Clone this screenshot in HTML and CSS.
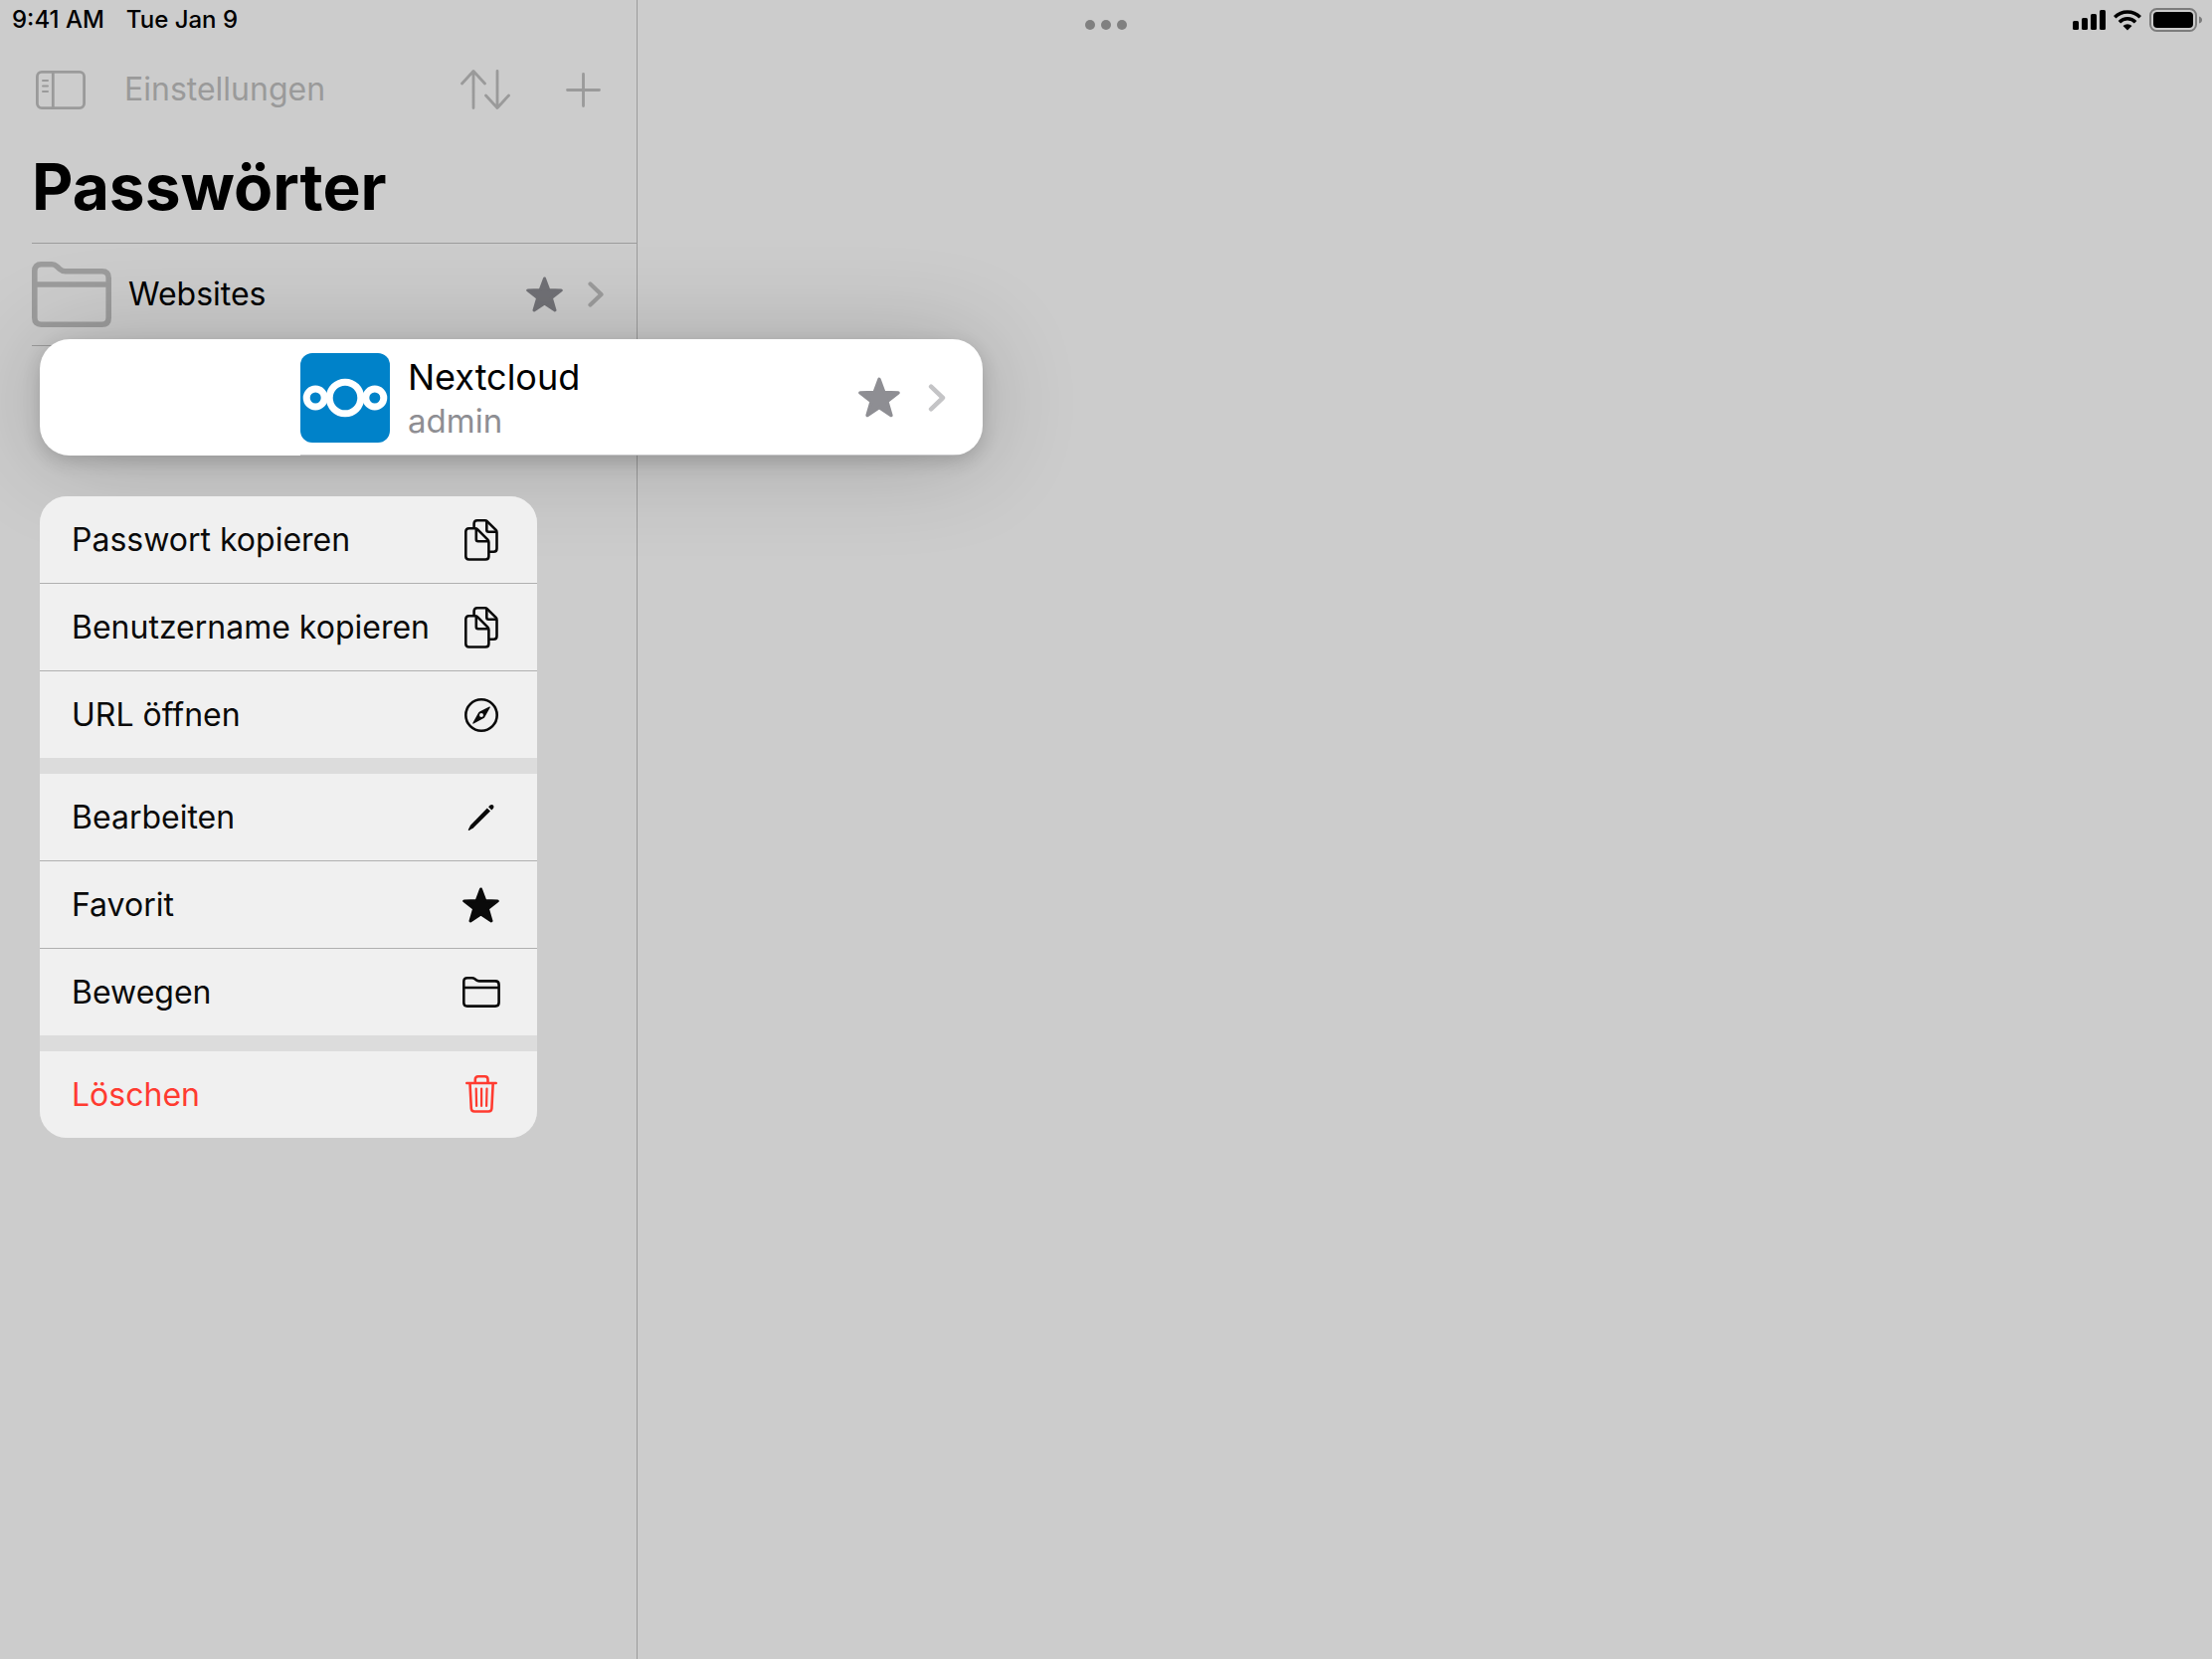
FILE: index.html
```html
<!DOCTYPE html>
<html lang="de">
<head>
<meta charset="utf-8">
<meta name="viewport" content="width=device-width, initial-scale=1">
<title>Passwörter</title>
<link rel="stylesheet" href="styles.css">
</head>
<body>
<svg class="defs" aria-hidden="true">
  <symbol id="star" viewBox="0 0 37 36">
    <path d="M18.5 2 22.8 13.6 35.3 13.9 25.4 21.6 29 33.9 18.5 26.9 8 33.9 11.6 21.6 1.7 13.9 14.2 13.6Z" fill="currentColor" stroke="currentColor" stroke-width="3" stroke-linejoin="round"/>
  </symbol>
  <symbol id="chevron" viewBox="0 0 16 26">
    <path d="M2.500 2.500 13.500 13 2.500 23.500" fill="none" stroke="currentColor" stroke-width="4.200" stroke-linecap="round" stroke-linejoin="round"/>
  </symbol>
  <symbol id="copy" viewBox="0 0 34 42">
    <g fill="none" stroke="currentColor" stroke-width="2.6" stroke-linejoin="round">
      <path d="M9.600 9V4.500Q9.600 1.300 12.800 1.300H20.500Q22 1.300 23 2.300L31.400 10.700Q32.500 11.800 32.500 13.300V29.500Q32.500 32.700 29.300 32.700H25"/>
      <path d="M22.300 1.500V10.800Q22.300 12.800 24.300 12.800H32.500"/>
      <path d="M4.500 9.300H10.500Q12.100 9.300 13.200 10.400L23.200 20.400Q24.400 21.600 24.400 23.200V37.300Q24.400 40.500 21.200 40.500H4.500Q1.300 40.500 1.300 37.300V12.500Q1.300 9.300 4.500 9.300Z"/>
      <path d="M11.800 9.800V20.300Q11.800 22.300 13.800 22.300H24"/>
    </g>
  </symbol>
</svg>

<header class="status">
  <div class="status-side"><span>9:41 AM</span><span>Tue Jan 9</span></div>
  <button class="dots" type="button" aria-label="Multitasking"><i></i><i></i><i></i></button>
  <div class="status-side status-right">
    <svg class="signal" width="34" height="21" viewBox="0 0 34 21"><rect y="11" width="6" height="9" rx="1.500"/><rect x="9" y="8" width="6" height="12" rx="1.500"/><rect x="18" y="4" width="6" height="16" rx="1.500"/><rect x="27" width="6" height="20" rx="1.500"/></svg>
    <svg width="28" height="21" viewBox="0 0 28 21"><g fill="none" stroke="#000" stroke-width="3.500"><path d="M1.200 7.200A18.200 18.200 0 0 1 26.800 7.200"/><path d="M5.900 12.200A11.500 11.500 0 0 1 22.100 12.200"/></g><path d="M9.500 16A6.400 6.400 0 0 1 18.500 16L14 20.500Z"/></svg>
    <svg width="54" height="24" viewBox="0 0 54 24"><rect x="1" y="1" width="46" height="22" rx="6.500" fill="none" stroke="#7c7c7c" stroke-width="2"/><rect x="4" y="4" width="40" height="16" rx="4"/><path d="M50 8.500Q53 9.500 53 12T50 15.500Z" fill="#7c7c7c"/></svg>
  </div>
</header>

<div class="app">
  <aside class="sidebar">
    <nav class="toolbar">
      <button type="button" aria-label="Seitenleiste">
        <svg width="50" height="39" viewBox="0 0 50 39" fill="none" stroke="currentColor" stroke-width="2.800" stroke-linecap="round"><rect x="1.400" y="1.400" width="47.200" height="36.200" rx="4.500"/><path d="M17.300 1.300V37.700"/><path d="M7 10H12M7 15.500H12M7 21H12" stroke-width="2"/></svg>
      </button>
      <button class="settings" type="button">Einstellungen</button>
      <button type="button" aria-label="Sortieren">
        <svg width="50" height="40" viewBox="0 0 50 40" fill="none" stroke="currentColor" stroke-width="2.800" stroke-linecap="round" stroke-linejoin="round"><path d="M13 38.500V2M1.500 14 13 1.500 24.500 14M37 1.500V38M25.500 26 37 38.500 48.500 26"/></svg>
      </button>
      <button type="button" aria-label="Neu">
        <svg width="35" height="35" viewBox="0 0 35 35" fill="none" stroke="currentColor" stroke-width="2.800" stroke-linecap="round"><path d="M17.500 1.500V33.500M1.500 17.500H33.500"/></svg>
      </button>
    </nav>
    <h1>Passwörter</h1>
    <ul class="list">
      <li><a class="row" href="#websites">
        <svg class="folder" width="80" height="66" viewBox="0 0 80 66" fill="none" stroke="currentColor" stroke-width="5.600"><path d="M2.800 9.500Q2.800 2.800 9.500 2.800H20Q23 2.800 25.300 5L28 7.500Q30.500 9.800 34 9.800H70.500Q77.200 9.800 77.200 16.500V56.500Q77.200 63.200 70.500 63.200H9.500Q2.800 63.200 2.800 56.500Z"/><path d="M3 23H77"/></svg>
        <span class="name">Websites</span>
        <svg class="fav" width="37" height="36"><use href="#star"/></svg>
        <svg class="more" width="16" height="26"><use href="#chevron"/></svg>
      </a></li>
    </ul>
  </aside>
  <main class="detail"></main>
</div>

<div class="overlay">
  <a class="preview" href="#nextcloud">
    <svg class="logo" width="90" height="90" viewBox="0 0 90 90"><rect width="90" height="90" rx="12" fill="#0082c9"/><g fill="none" stroke="#fff" stroke-width="7"><circle cx="45" cy="45" r="15.800"/><circle cx="15.200" cy="45" r="9"/><circle cx="74.800" cy="45" r="9"/></g></svg>
    <span class="entry"><span class="entry-title">Nextcloud</span><span class="entry-user">admin</span></span>
    <svg class="fav" width="42" height="41" viewBox="0 0 37 36"><use href="#star"/></svg>
    <svg class="more" width="18" height="28"><use href="#chevron"/></svg>
  </a>
  <div class="menu">
    <div class="group">
      <button type="button">Passwort kopieren<span class="icon"><svg width="34" height="42"><use href="#copy"/></svg></span></button>
      <button type="button">Benutzername kopieren<span class="icon"><svg width="34" height="42"><use href="#copy"/></svg></span></button>
      <button type="button">URL öffnen<span class="icon"><svg width="34" height="34" viewBox="0 0 34 34"><circle cx="17" cy="17" r="15.700" fill="none" stroke="currentColor" stroke-width="2.600"/><path fill="currentColor" fill-rule="evenodd" d="M25.800 9.300Q26.200 8.300 25 8.600L15.200 13.600Q14.200 14.200 13.700 15.200L8.400 24.800Q8 26 9.300 25.500L19 20.300Q20 19.700 20.500 18.700ZM17 15A2 2 0 1 1 17 19A2 2 0 1 1 17 15Z"/></svg></span></button>
    </div>
    <div class="group">
      <button type="button">Bearbeiten<span class="icon"><svg width="28" height="28" viewBox="0 0 28 28" fill="currentColor"><path d="M19.800 4.500 23 7.600 5.800 24.500 1.600 26.900Q.500 27.200.900 26L3 21.800Z"/><path d="M21.100 3.300 22.800 1.600Q24.300.300 25.800 1.600 27.200 3.100 26 4.700L24.300 6.400Z"/></svg></span></button>
      <button type="button">Favorit<span class="icon"><svg width="38" height="36" viewBox="0 0 38 36"><use href="#star" width="37" height="36"/></svg></span></button>
      <button type="button">Bewegen<span class="icon"><svg width="38" height="31" viewBox="0 0 38 31" fill="none" stroke="currentColor" stroke-width="2.600"><path d="M1.300 4.900Q1.300 1.300 4.900 1.300H9.500Q11.200 1.300 12.500 2.300L13.700 3.300Q15 4.400 16.700 4.400H33Q36.600 4.400 36.600 8V26Q36.600 29.600 33 29.600H4.900Q1.300 29.600 1.300 26Z"/><path d="M1.500 11H36.500"/></svg></span></button>
    </div>
    <div class="group">
      <button class="danger" type="button">Löschen<span class="icon"><svg width="32" height="40" viewBox="0 0 32 40" fill="none" stroke="currentColor" stroke-width="2.600" stroke-linecap="round"><path d="M1.300 8H30.700M9.800 7.500V4.300Q9.800 1.300 12.800 1.300H19.500Q22.500 1.300 22.500 4.300V7.500M4.500 8 5.800 33.500Q6 36.500 9 36.500H23.200Q26.200 36.500 26.400 33.500L27.700 8"/><path d="M10.700 13.500 11.100 31M16.100 13.500V31M21.500 13.500 21.100 31" stroke-width="2.200"/></svg></span></button>
    </div>
  </div>
</div>
</body>
</html>
```
FILE: styles.css
```css
* { box-sizing: border-box; }

body {
  margin: 0;
  min-height: 100vh;
  position: relative;
  background: #ccc;
  color: #000;
  font-family: Inter, "Liberation Sans", sans-serif;
  font-size: 32px;
  line-height: 40px;
}

button {
  padding: 0;
  border: 0;
  background: none;
  color: inherit;
  font: inherit;
}

a { color: inherit; text-decoration: none; }
svg { display: block; flex: none; }
.defs { position: absolute; width: 0; height: 0; }

/* Status bar */
.status {
  position: absolute;
  inset: 0 0 auto;
  display: grid;
  grid-template-columns: 1fr auto 1fr;
  align-items: center;
  height: 40px;
  padding: 0 9px 0 12px;
  font-size: 24px;
  font-weight: 500;
}
.status-side { display: flex; gap: 22px; align-items: center; }
.status-right { justify-content: flex-end; gap: 8px; }
.signal { margin-right: -1px; }
.dots { display: flex; gap: 6px; padding: 10px 3px 0 0; }
.dots i { width: 10px; height: 10px; border-radius: 50%; background: #808080; }

/* Sidebar */
.app {
  display: grid;
  grid-template-columns: 641px 1fr;
  min-height: 100vh;
}
.sidebar {
  padding: 60px 0 0 32px;
  border-right: 1px solid #9c9c9c;
}
.toolbar {
  display: flex;
  align-items: center;
  height: 60px;
  padding: 0 36px 0 4px;
  gap: 56px;
  color: #9a9a9a;
}
.toolbar .settings { margin: 0 auto 0 -17px; }
h1 {
  margin: 0;
  padding: 28px 0 16px;
  font-size: 64px;
  font-weight: 700;
  line-height: 80px;
}
.list { margin: 0; padding: 0; list-style: none; border-top: 1px solid #9c9c9c; }
.row {
  display: flex;
  align-items: center;
  height: 103px;
  padding-right: 33px;
  border-bottom: 1px solid #9c9c9c;
}
.folder { color: #9c9c9c; }
.name { flex: 1; padding-left: 17px; }
.row .fav { margin-right: 25px; color: #717176; }
.row .more { color: #9c9c9c; }

/* Lifted entry and its context menu */
.overlay {
  position: absolute;
  top: 341px;
  left: 40px;
  display: grid;
  gap: 41px;
}
.preview {
  display: flex;
  align-items: center;
  width: 948px;
  height: 117px;
  padding: 0 37px 0 262px;
  border-radius: 30px;
  background: linear-gradient(#c6c6c8, #c6c6c8) 262px 100% / 100% 1px no-repeat #fff;
  box-shadow: 0 6px 18px rgba(0, 0, 0, .16), 0 4px 100px rgba(0, 0, 0, .2);
}
.entry { display: grid; flex: 1; gap: 2px; padding-left: 18px; }
.entry-title { font-size: 36px; line-height: 44px; }
.entry-user { color: #8e8e93; font-size: 33px; }
.preview .fav { margin-right: 28px; color: #8e8e93; }
.preview .more { color: #c4c4c6; }

.menu {
  position: relative;
  display: grid;
  gap: 16px;
  width: 500px;
  border-radius: 27px;
  overflow: hidden;
  background: #dcdcdc;
  color: #0a0a0a;
}
.group { background: #f0f0f0; }
.group button {
  display: flex;
  align-items: center;
  justify-content: space-between;
  width: 100%;
  height: 87px;
  padding: 0 36px 0 32px;
  text-align: left;
}
.group button + button { height: 88px; border-top: 1px solid #b0b0b0; }
.icon { display: grid; place-items: center; width: 40px; }
.group .danger { color: #ff3b30; }
```
